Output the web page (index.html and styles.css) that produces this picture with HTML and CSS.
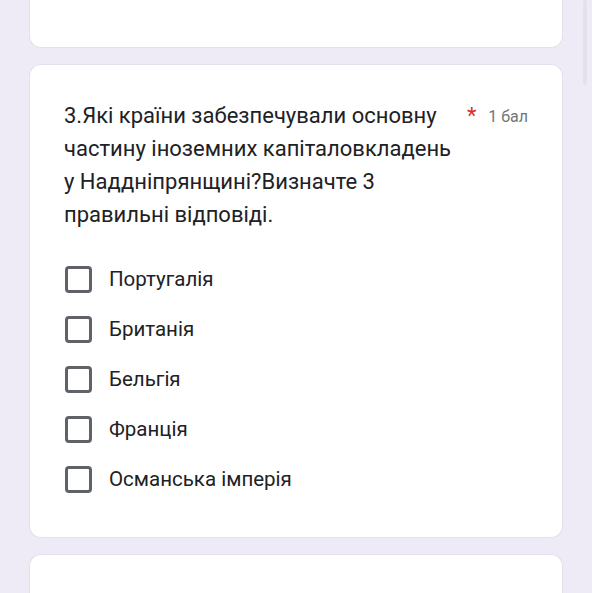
FILE: index.html
```html
<!DOCTYPE html>
<html lang="uk">
<head>
    <meta charset="UTF-8">
    <meta name="viewport" content="width=device-width, initial-scale=1.0">
    <title>Форма</title>
    <link rel="stylesheet" href="styles.css">
</head>
<body>
    <div class="scroll_thumb"></div>
    <div class="page">
        <!-- попередня картка (обрізана) -->
        <div class="card card_prev"></div>

        <!-- питання 3 -->
        <div class="card card_question">
            <div class="q_head">
                <div class="q_title">3.Які країни забезпечували основну частину іноземних капіталовкладень у Наддніпрянщині?Визначте 3 правильні відповіді.</div>
                <span class="q_required">*</span>
                <span class="q_points">1 бал</span>
            </div>
            <div class="options">
                <label class="option"><span class="box"></span><span class="option_text">Португалія</span></label>
                <label class="option"><span class="box"></span><span class="option_text">Британія</span></label>
                <label class="option"><span class="box"></span><span class="option_text">Бельгія</span></label>
                <label class="option"><span class="box"></span><span class="option_text">Франція</span></label>
                <label class="option"><span class="box"></span><span class="option_text">Османська імперія</span></label>
            </div>
        </div>

        <!-- наступна картка -->
        <div class="card card_next"></div>
    </div>
</body>
</html>
```

FILE: styles.css
```css
/* загальне */
body{
    margin: 0;
    background: #eeebf6;
    font-family: Roboto, "Noto Sans", Arial, sans-serif;
    color: #202124;
    overflow: hidden;
}
.page{
    padding: 0 30px;
    display: flex;
    flex-direction: column;
    gap: 18px;
}
.card{
    background: #fff;
    border-radius: 11px;
    box-shadow: 0 0 0 1px #e3e0ea;
}
.card_prev{
    height: 47px;
    border-radius: 0 0 11px 11px;
}
.card_next{
    height: 60px;
}

/* питання */
.card_question{
    padding: 34px 34px 33px 34px;
}
.q_head{
    display: flex;
    align-items: flex-start;
}
.q_title{
    flex: 1;
    font-size: 22px;
    line-height: 33px;
    padding-right: 12px;
    max-width: 395px;
}
.q_required{
    color: #d93025;
    font-size: 22px;
    line-height: 33px;
    margin-left: -4px;
    margin-right: 8px;
}
.q_points{
    color: #70757a;
    font-size: 16px;
    line-height: 35px;
    margin-left: auto;
}

/* варіанти */
.options{
    margin-top: 23px;
    display: flex;
    flex-direction: column;
}
.option{
    height: 50px;
    display: flex;
    align-items: center;
    gap: 17px;
}
.box{
    width: 21px;
    height: 21px;
    border: 3px solid #5f6368;
    border-radius: 4px;
    margin-left: 1px;
}
.option_text{
    font-size: 20.5px;
}

/* смуга прокрутки */
.scroll_thumb{
    position: absolute;
    top: 0;
    right: 5px;
    width: 4px;
    height: 85px;
    background: #e4e1ec;
    border-radius: 2px;
}
```
